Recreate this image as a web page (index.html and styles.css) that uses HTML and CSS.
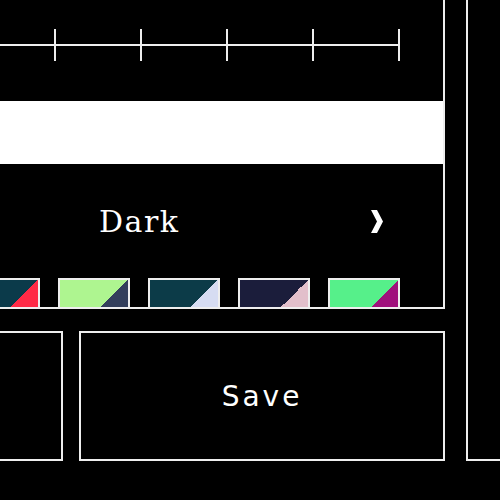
FILE: index.html
```html
<!DOCTYPE html>
<html lang="en">
<head>
    <meta charset="UTF-8">
    <meta name="viewport" content="width=device-width, initial-scale=1.0">
    <title>Theme Picker</title>
    <link rel="stylesheet" href="styles.css">
</head>
<body>
    <div class="page">
        <div class="main">
            <section class="panel">
                <div class="ruler">
                    <span class="tick"></span>
                    <span class="tick"></span>
                    <span class="tick"></span>
                    <span class="tick"></span>
                    <span class="tick"></span>
                    <span class="tick"></span>
                </div>

                <div class="input-bar"></div>

                <div class="theme-row">
                    <span class="theme-name">Dark</span>
                    <button class="next" aria-label="Next theme">
                        <svg width="12" height="23" viewBox="0 0 12 23">
                            <polygon points="0,0 6,0 12,11.5 6,23 0,23 6,11.5" fill="#fff"/>
                        </svg>
                    </button>
                </div>

                <div class="swatches">
                    <div class="swatch s1"></div>
                    <div class="swatch s2"></div>
                    <div class="swatch s3"></div>
                    <div class="swatch s4"></div>
                    <div class="swatch s5"></div>
                </div>
            </section>

            <div class="actions">
                <button class="btn btn-cancel"></button>
                <button class="btn btn-save">Save</button>
            </div>
        </div>

        <aside class="side"></aside>
    </div>
</body>
</html>
```

FILE: styles.css
```css
body {
    margin: 0;
    background: #000;
    color: #fff;
    overflow: hidden;
}
.page {
    display: flex;
    gap: 21px;
    margin: -40px 0 0 -79px;
}
.main {
    width: 524px;
    flex: none;
}
.panel {
    height: 349px;
    box-sizing: border-box;
    border: 2px solid #eee;
    padding: 67px 43px 0 45px;
}
.ruler {
    display: flex;
    justify-content: space-between;
    height: 32px;
    margin-bottom: 40px;
    background: linear-gradient(#eee, #eee) center / 100% 2px no-repeat;
}
.tick {
    width: 2px;
    background: #eee;
}
.input-bar {
    height: 63px;
    margin: 0 -43px 0 -45px;
    background: #fff;
}
.theme-row {
    display: flex;
    align-items: center;
    justify-content: space-between;
    height: 114px;
    padding-left: 131px;
}
.theme-name {
    font-family: "DejaVu Serif", serif;
    font-size: 30px;
    letter-spacing: 1.5px;
}
.next {
    background: none;
    border: none;
    padding: 0;
    margin-right: 17px;
    display: flex;
}
.swatches {
    display: flex;
    gap: 18px;
    height: 29px;
    overflow: hidden;
}
.swatch {
    width: 72px;
    height: 72px;
    flex: none;
    box-sizing: border-box;
    border: 2px solid #eee;
}
.s1 { background: linear-gradient(135deg, #0b3a4a 50%, #ff2a46 50%); }
.s2 { background: linear-gradient(135deg, #aef590 50%, #333f5c 50%); }
.s3 { background: linear-gradient(135deg, #0c3b48 50%, #d6dcf2 50%); }
.s4 { background: linear-gradient(135deg, #1b1d3b 50%, #e2bfcb 50%); }
.s5 { background: linear-gradient(135deg, #56f08a 50%, #a0107c 50%); }
.actions {
    display: flex;
    gap: 16px;
    height: 130px;
    margin-top: 22px;
}
.btn {
    background: #000;
    border: 2px solid #eee;
    color: #fff;
    font-family: "DejaVu Sans", sans-serif;
    font-size: 28px;
    letter-spacing: 3px;
}
.btn-cancel {
    width: 142px;
    flex: none;
}
.btn-save {
    flex: 1;
}
.side {
    width: 300px;
    flex: none;
    box-sizing: border-box;
    border: 2px solid #eee;
}
```
